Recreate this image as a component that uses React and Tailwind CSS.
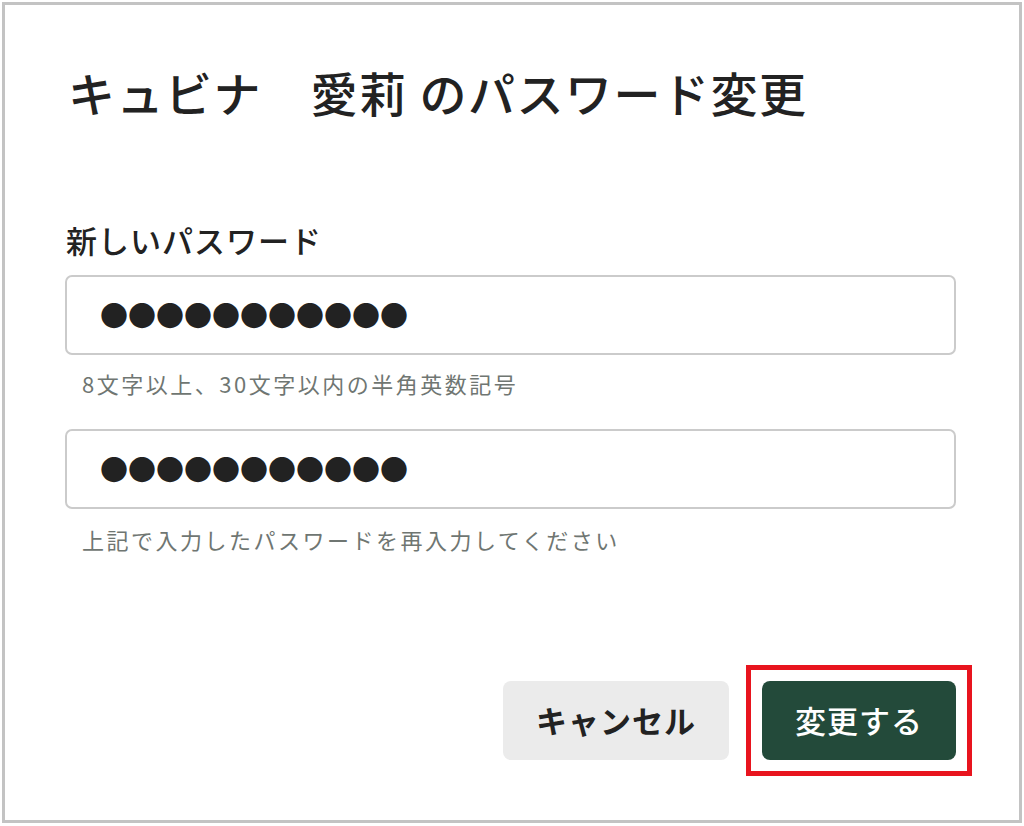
export default function App() {
  const jp = { fontFamily: '"Noto Sans CJK JP", "Noto Sans", sans-serif' };
  return (
    <div className="w-[1024px] h-[826px] bg-white pl-[2px] pt-[2px]" style={jp}>
      <div className="w-[1020px] h-[821px] border-[3px] border-[#c3c3c3] bg-white flex flex-col pl-[60px] pr-[63px]">
        <h1 className="mt-[55px] ml-[3px] text-[47px] leading-[64px] font-medium tracking-[1.5px] text-[#222] whitespace-pre">
          キュビナ　愛莉 のパスワード変更
        </h1>
        <label className="mt-[96px] ml-[1px] text-[31px] leading-[40px] font-medium tracking-[1px] text-[#222]">
          新しいパスワード
        </label>
        <div className="mt-[15px] h-[80px] border-2 border-[#cbcbcb] rounded-[7px] flex items-center pl-[33px]">
          <span className="text-[28px] leading-none text-[#222]">●●●●●●●●●●●</span>
        </div>
        <p className="mt-[14px] ml-[17px] text-[22px] leading-[28px] tracking-[2.5px] text-[#6f7672]">
          8文字以上、30文字以内の半角英数記号
        </p>
        <div className="mt-[32px] h-[80px] border-2 border-[#cbcbcb] rounded-[7px] flex items-center pl-[33px]">
          <span className="text-[28px] leading-none text-[#222]">●●●●●●●●●●●</span>
        </div>
        <p className="mt-[16px] ml-[17px] text-[22px] leading-[28px] tracking-[2.5px] text-[#6f7672]">
          上記で入力したパスワードを再入力してください
        </p>
        <div className="mt-[112px] flex justify-end items-center">
          <button className="w-[226px] h-[79px] rounded-[8px] bg-[#ebebeb] text-[31px] font-bold tracking-[1px] text-[#222]">
            キャンセル
          </button>
          <div className="ml-[17px] -mr-[16px] border-[5px] border-[#e8141e] p-[11px]">
            <button className="w-[194px] h-[79px] rounded-[8px] bg-[#234a3a] text-[31px] font-medium tracking-[1px] text-white">
              変更する
            </button>
          </div>
        </div>
      </div>
    </div>
  );
}
